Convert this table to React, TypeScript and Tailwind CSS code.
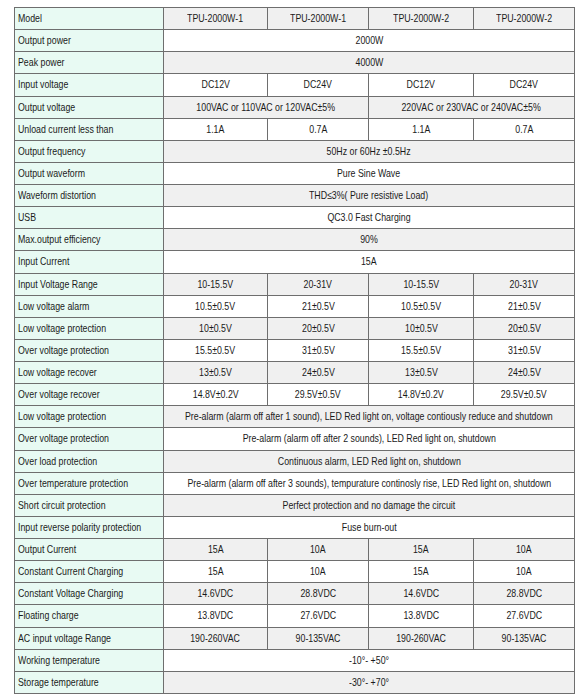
import React from "react";

type Cell = { t: string; span?: number };
type Row = { label: string; cells: Cell[] };

const four = (a: string, b: string, c: string, d: string): Cell[] => [
  { t: a },
  { t: b },
  { t: c },
  { t: d },
];
const all = (t: string): Cell[] => [{ t, span: 4 }];

const rows: Row[] = [
  { label: "Model", cells: four("TPU-2000W-1", "TPU-2000W-1", "TPU-2000W-2", "TPU-2000W-2") },
  { label: "Output power", cells: all("2000W") },
  { label: "Peak power", cells: all("4000W") },
  { label: "Input voltage", cells: four("DC12V", "DC24V", "DC12V", "DC24V") },
  {
    label: "Output voltage",
    cells: [
      { t: "100VAC or 110VAC or 120VAC±5%", span: 2 },
      { t: "220VAC or 230VAC or 240VAC±5%", span: 2 },
    ],
  },
  { label: "Unload current less than", cells: four("1.1A", "0.7A", "1.1A", "0.7A") },
  { label: "Output frequency", cells: all("50Hz or 60Hz ±0.5Hz") },
  { label: "Output waveform", cells: all("Pure Sine Wave") },
  { label: "Waveform distortion", cells: all("THD≤3%( Pure resistive Load)") },
  { label: "USB", cells: all("QC3.0 Fast Charging") },
  { label: "Max.output efficiency", cells: all("90%") },
  { label: "Input Current", cells: all("15A") },
  { label: "Input Voltage Range", cells: four("10-15.5V", "20-31V", "10-15.5V", "20-31V") },
  { label: "Low voltage alarm", cells: four("10.5±0.5V", "21±0.5V", "10.5±0.5V", "21±0.5V") },
  { label: "Low voltage protection", cells: four("10±0.5V", "20±0.5V", "10±0.5V", "20±0.5V") },
  { label: "Over voltage protection", cells: four("15.5±0.5V", "31±0.5V", "15.5±0.5V", "31±0.5V") },
  { label: "Low voltage recover", cells: four("13±0.5V", "24±0.5V", "13±0.5V", "24±0.5V") },
  { label: "Over voltage recover", cells: four("14.8V±0.2V", "29.5V±0.5V", "14.8V±0.2V", "29.5V±0.5V") },
  {
    label: "Low voltage protection",
    cells: all("Pre-alarm (alarm off after 1 sound), LED Red light on, voltage contiously reduce and shutdown"),
  },
  {
    label: "Over voltage protection",
    cells: all("Pre-alarm (alarm off after 2 sounds), LED Red light on,  shutdown"),
  },
  { label: "Over load protection", cells: all("Continuous alarm, LED Red light on, shutdown") },
  {
    label: "Over temperature protection",
    cells: all("Pre-alarm (alarm off after 3 sounds), tempurature continosly rise, LED Red light on, shutdown"),
  },
  { label: "Short circuit protection", cells: all("Perfect protection and no damage the circuit") },
  { label: "Input reverse polarity protection", cells: all("Fuse burn-out") },
  { label: "Output Current", cells: four("15A", "10A", "15A", "10A") },
  { label: "Constant Current Charging", cells: four("15A", "10A", "15A", "10A") },
  { label: "Constant Voltage Charging", cells: four("14.6VDC", "28.8VDC", "14.6VDC", "28.8VDC") },
  { label: "Floating charge", cells: four("13.8VDC", "27.6VDC", "13.8VDC", "27.6VDC") },
  { label: "AC input voltage Range", cells: four("190-260VAC", "90-135VAC", "190-260VAC", "90-135VAC") },
  { label: "Working temperature", cells: all("-10°- +50°") },
  { label: "Storage temperature", cells: all("-30°- +70°") },
];

export default function App() {
  return (
    <div className="w-[580px] h-[700px] bg-white pt-[7px] pl-[14px]">
      <table
        className="border-collapse table-fixed w-[560px] text-[11px] text-[#1a1a1a] leading-none"
        style={{ fontFamily: '"Liberation Sans", Arial, sans-serif' }}
      >
        <colgroup>
          <col className="w-[149px]" />
          <col className="w-[104px]" />
          <col className="w-[101px]" />
          <col className="w-[105px]" />
          <col className="w-[101px]" />
        </colgroup>
        <tbody>
          {rows.map((r, i) => (
            <tr key={i} className="h-[22.13px]">
              <td className="border border-[#6e6e6e] bg-[#e8faf3] pl-[3px] pr-0 py-0">
                <div className="flex">
                  <span className="inline-block whitespace-nowrap origin-left scale-x-[0.8]">{r.label}</span>
                </div>
              </td>
              {r.cells.map((c, j) => (
                <td
                  key={j}
                  colSpan={c.span ?? 1}
                  className={
                    "border border-[#6e6e6e] p-0 " + (i % 2 === 0 ? "bg-[#f0f0f0]" : "bg-white")
                  }
                >
                  <div className="flex justify-center">
                    <span className="inline-block whitespace-nowrap origin-center scale-x-[0.8]">{c.t}</span>
                  </div>
                </td>
              ))}
            </tr>
          ))}
        </tbody>
      </table>
    </div>
  );
}
